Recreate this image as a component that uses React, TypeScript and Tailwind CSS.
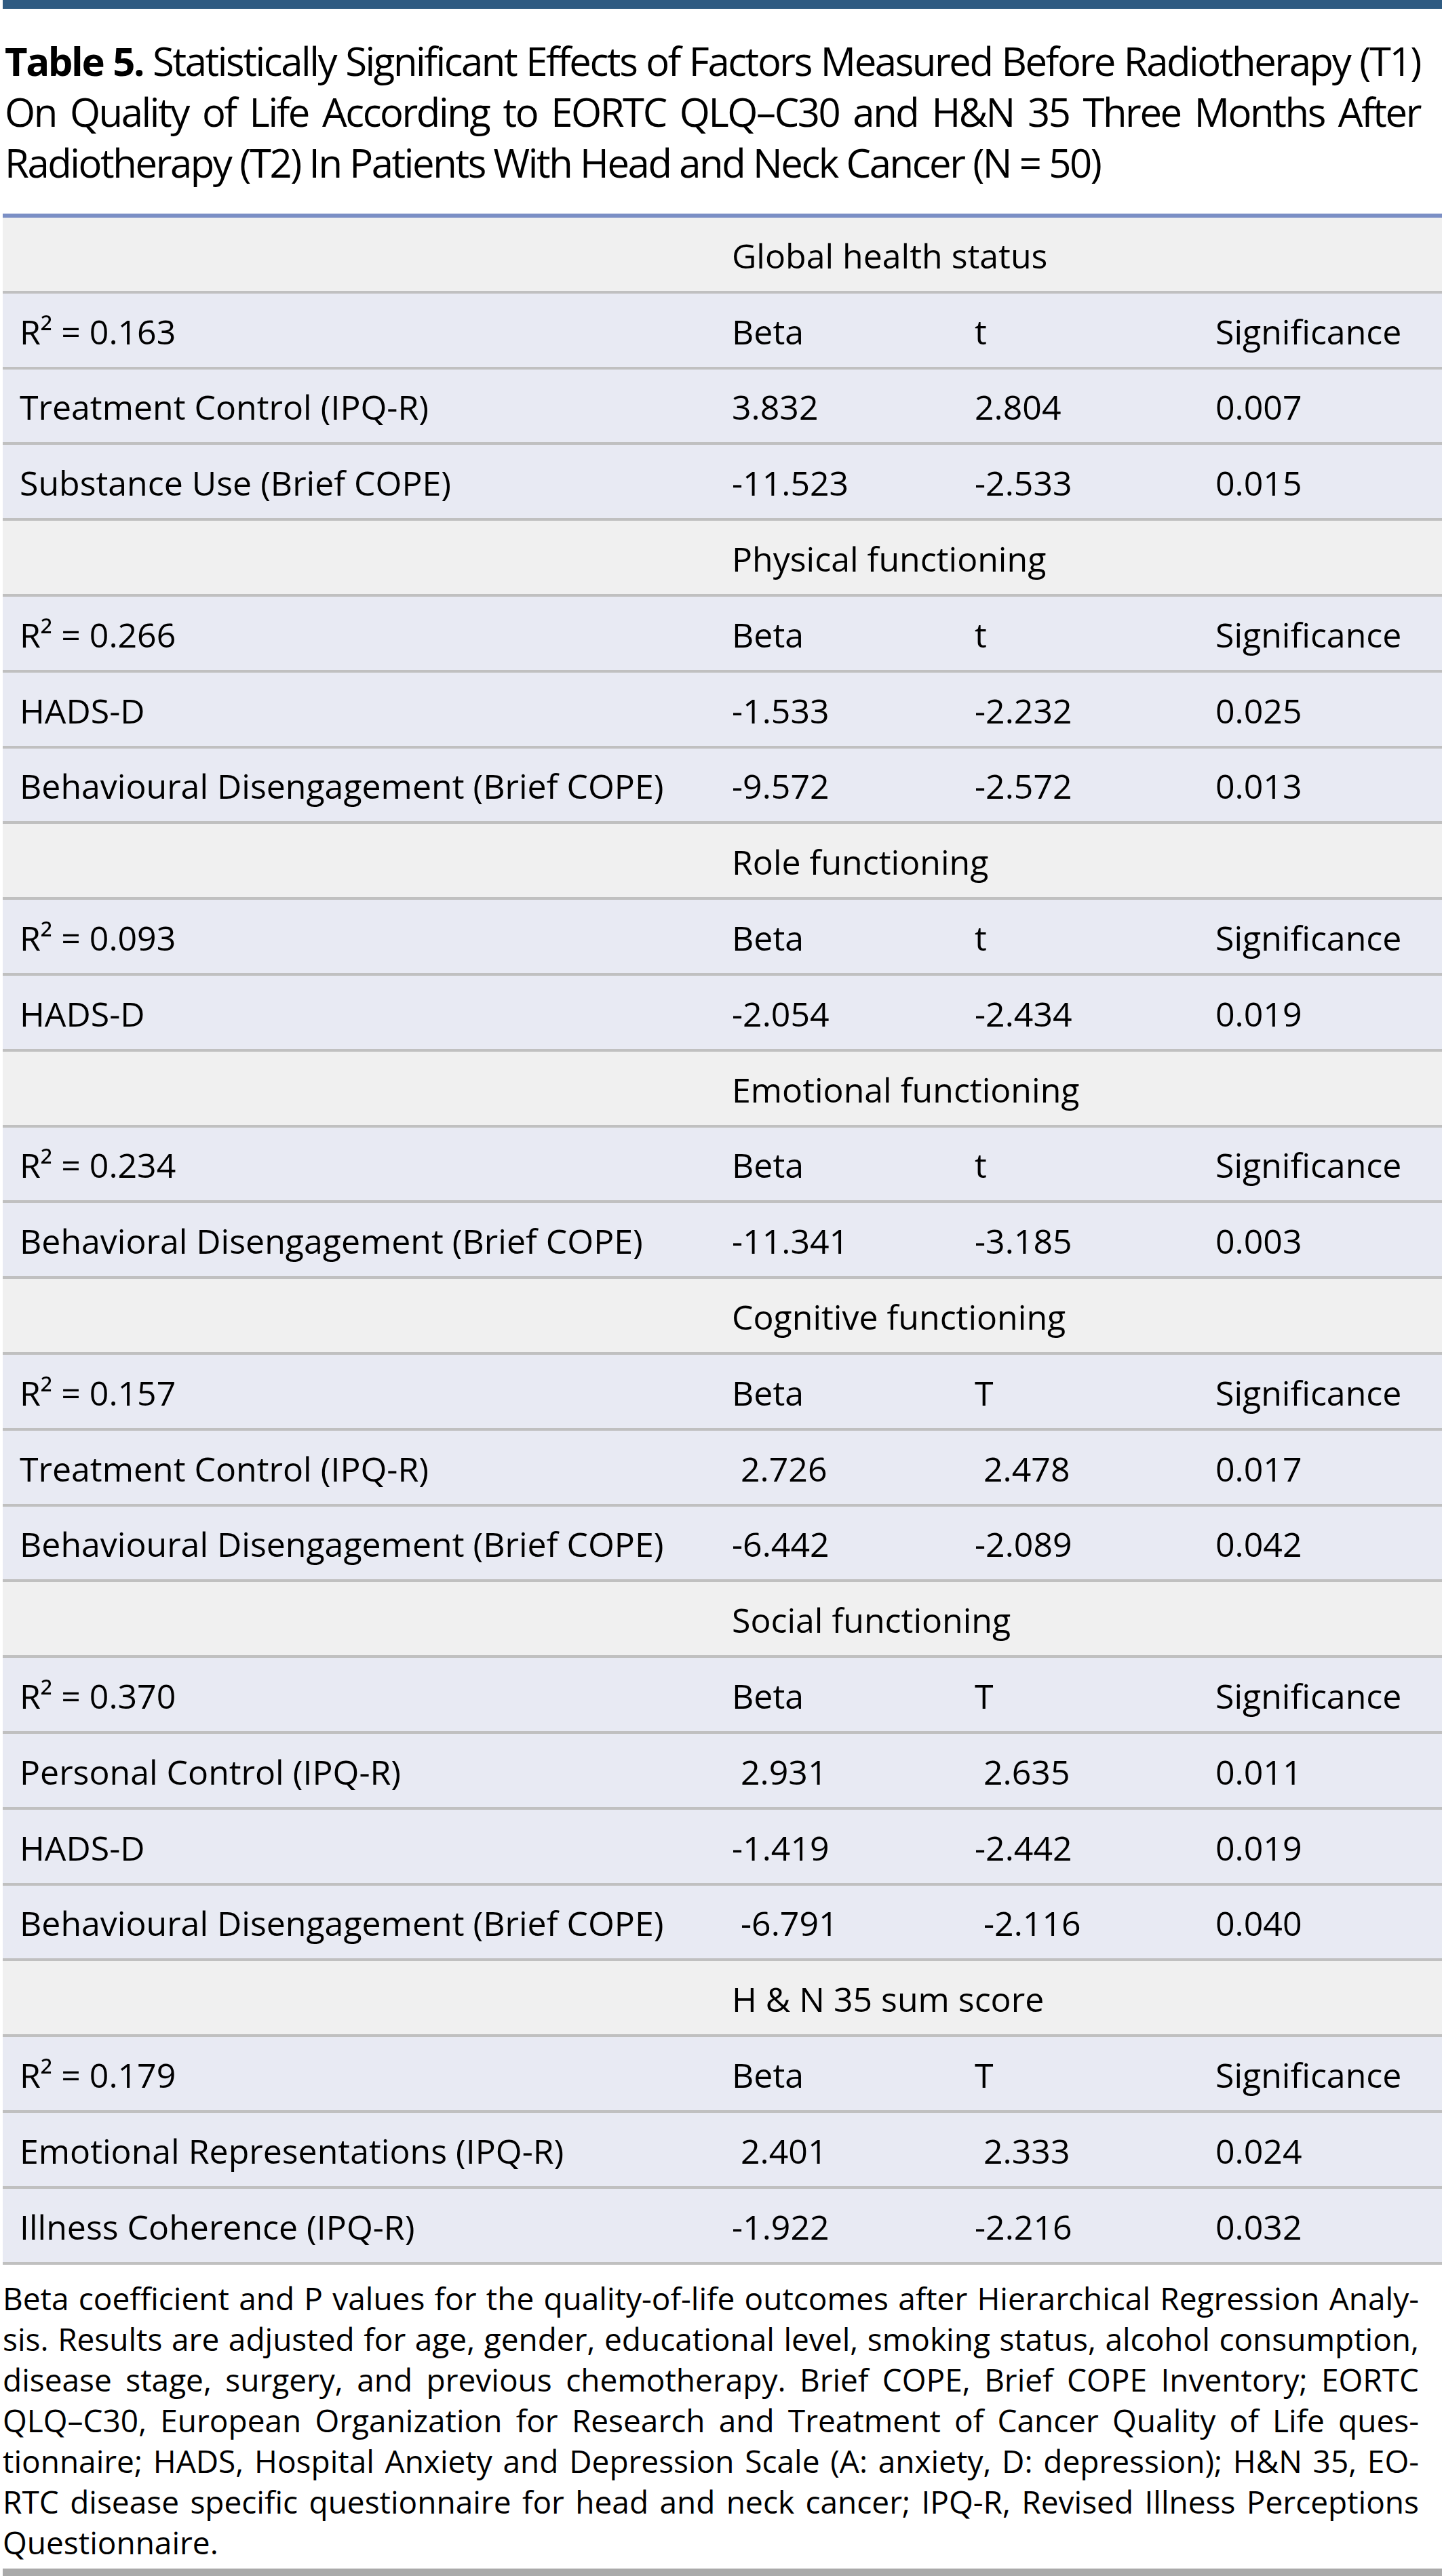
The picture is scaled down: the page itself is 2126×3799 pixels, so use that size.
import React from "react";

type Row = [string, string, string, string];
type Section = { title: string; r2: string; t: string; rows: Row[] };

const sections: Section[] = [
  {
    title: "Global health status",
    r2: "0.163",
    t: "t",
    rows: [
      ["Treatment Control (IPQ-R)", "3.832", "2.804", "0.007"],
      ["Substance Use (Brief COPE)", "-11.523", "-2.533", "0.015"],
    ],
  },
  {
    title: "Physical functioning",
    r2: "0.266",
    t: "t",
    rows: [
      ["HADS-D", "-1.533", "-2.232", "0.025"],
      ["Behavioural Disengagement (Brief COPE)", "-9.572", "-2.572", "0.013"],
    ],
  },
  {
    title: "Role functioning",
    r2: "0.093",
    t: "t",
    rows: [["HADS-D", "-2.054", "-2.434", "0.019"]],
  },
  {
    title: "Emotional functioning",
    r2: "0.234",
    t: "t",
    rows: [["Behavioral Disengagement (Brief COPE)", "-11.341", "-3.185", "0.003"]],
  },
  {
    title: "Cognitive functioning",
    r2: "0.157",
    t: "T",
    rows: [
      ["Treatment Control (IPQ-R)", " 2.726", " 2.478", "0.017"],
      ["Behavioural Disengagement (Brief COPE)", "-6.442", "-2.089", "0.042"],
    ],
  },
  {
    title: "Social functioning",
    r2: "0.370",
    t: "T",
    rows: [
      ["Personal Control (IPQ-R)", " 2.931", " 2.635", "0.011"],
      ["HADS-D", "-1.419", "-2.442", "0.019"],
      ["Behavioural Disengagement (Brief COPE)", " -6.791", " -2.116", "0.040"],
    ],
  },
  {
    title: "H & N 35 sum score",
    r2: "0.179",
    t: "T",
    rows: [
      ["Emotional Representations (IPQ-R)", " 2.401", " 2.333", "0.024"],
      ["Illness Coherence (IPQ-R)", "-1.922", "-2.216", "0.032"],
    ],
  },
];

const rowBase =
  "grid grid-cols-[1053px_358px_355px_1fr] h-[111.8px] border-b-4 border-[#c0c0c0] items-center pt-[5px] text-[50px] leading-[69px] whitespace-pre";

function GroupRow({ title }: { title: string }) {
  return (
    <div className={rowBase + " bg-[#f0f0f0]"}>
      <div className="pl-[25px]" />
      <div className="col-span-3 pl-[22px]">{title}</div>
    </div>
  );
}

function DataRow({ cells }: { cells: React.ReactNode[] }) {
  return (
    <div className={rowBase + " bg-[#e8eaf3]"}>
      <div className="pl-[25px]">{cells[0]}</div>
      <div className="pl-[22px]">{cells[1]}</div>
      <div className="pl-[22px]">{cells[2]}</div>
      <div className="pl-[22px]">{cells[3]}</div>
    </div>
  );
}

export default function App() {
  return (
    <div className="w-[2126px] bg-white text-black font-['Open_Sans',sans-serif]">
      <div className="ml-[4px] h-[13px] bg-[#2f5b82]" />
      <div className="pl-[7px] pr-[32px] pt-[39px] pb-[38px] text-[58px] leading-[75px] tracking-[-2.4px] text-justify">
        <span className="font-bold">Table 5.</span> Statistically Significant Effects of Factors Measured
        Before Radiotherapy (T1) On Quality of Life According to EORTC QLQ–C30 and H&amp;N 35 Three
        Months After Radiotherapy (T2) In Patients With Head and Neck Cancer (N = 50)
      </div>
      <div className="ml-[4px] border-t-[6px] border-[#7b8fc5]">
        {sections.map((s) => (
          <React.Fragment key={s.title}>
            <GroupRow title={s.title} />
            <DataRow cells={["R² = " + s.r2, "Beta", s.t, "Significance"]} />
            {s.rows.map((r, i) => (
              <DataRow key={i} cells={r} />
            ))}
          </React.Fragment>
        ))}
      </div>
      <div className="ml-[4px] mr-[34px] pt-[19px] pb-[9px] text-[46px] leading-[60px] text-justify">
        Beta coefficient and P values for the quality-of-life outcomes after Hierarchical Regression
        Analy&shy;sis. Results are adjusted for age, gender, educational level, smoking status, alcohol
        consumption, disease stage, surgery, and previous chemotherapy. Brief COPE, Brief COPE
        Inventory; EORTC QLQ–C30, European Organization for Research and Treatment of Cancer Quality
        of Life ques&shy;tionnaire; HADS, Hospital Anxiety and Depression Scale (A: anxiety, D:
        depression); H&amp;N 35, EO&shy;RTC disease specific questionnaire for head and neck cancer;
        IPQ-R, Revised Illness Perceptions Questionnaire.
      </div>
      <div className="ml-[4px] h-[11px] bg-[#aaaaaa]" />
    </div>
  );
}
